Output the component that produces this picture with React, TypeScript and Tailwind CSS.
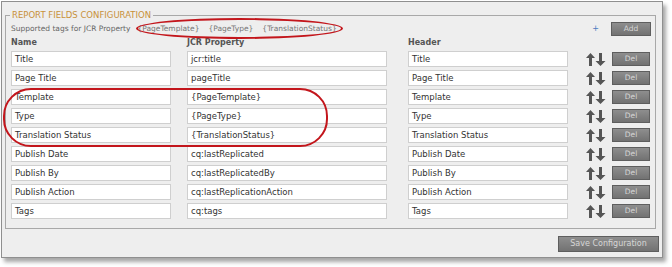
import React from 'react';

const rows = [
  ['Title', 'jcr:title', 'Title'],
  ['Page Title', 'pageTitle', 'Page Title'],
  ['Template', '{PageTemplate}', 'Template'],
  ['Type', '{PageType}', 'Type'],
  ['Translation Status', '{TranslationStatus}', 'Translation Status'],
  ['Publish Date', 'cq:lastReplicated', 'Publish Date'],
  ['Publish By', 'cq:lastReplicatedBy', 'Publish By'],
  ['Publish Action', 'cq:lastReplicationAction', 'Publish Action'],
  ['Tags', 'cq:tags', 'Tags'],
];

const font = { fontFamily: '"DejaVu Sans", Verdana, sans-serif' };

function Field({ value, className }: { value: string; className: string }) {
  return (
    <div
      className={`${className} flex h-[16px] shrink-0 items-center border border-[#cfcfcf] bg-white px-[3px] text-[8.5px] leading-none text-[#333]`}
    >
      {value}
    </div>
  );
}

function Arrows() {
  return (
    <svg width="20" height="13" viewBox="0 0 20 13" className="ml-[18px] shrink-0">
      <polygon points="4.5,0 9,5 6,5 6,13 3,13 3,5 0,5" fill="#555" />
      <polygon points="13,0 16,0 16,8 19.5,8 14.5,13 9.5,8 13,8" fill="#555" />
    </svg>
  );
}

function GrayButton({ label, className }: { label: string; className: string }) {
  return (
    <button
      className={`${className} flex shrink-0 items-center justify-center border border-[#5e5e5e] bg-gradient-to-b from-[#8e8e8e] to-[#727272] leading-none text-[#d6d6d6]`}
    >
      {label}
    </button>
  );
}

export default function App() {
  return (
    <div className="relative h-[267px] w-[672px] bg-white" style={font}>
      <div className="ml-[1px] mt-[1px] flex h-[257px] w-[662px] flex-col border border-[#8f8f8f] bg-[#eeeeee] px-[3px] pt-[7px] shadow-[3px_4px_4px_rgba(0,0,0,0.35)]">
        <fieldset className="w-[651px] border border-[#a8a8a8] pb-[9px] pl-[5px] pr-[4px]">
          <legend className="-ml-[1px] px-[2px] text-[8.5px] leading-[12px] text-[#c8913a]">
            REPORT FIELDS CONFIGURATION
          </legend>

          {/* supported tags + add */}
          <div className="mt-[1px] flex h-[14px] items-center">
            <span className="text-[7.5px] text-[#666]">Supported tags for JCR Property</span>
            <span className="ml-[7px] text-[7.5px] text-[#777]">{'{PageTemplate}'}</span>
            <span className="ml-[9px] text-[7.5px] text-[#777]">{'{PageType}'}</span>
            <span className="ml-[9px] text-[7.5px] text-[#777]">{'{TranslationStatus}'}</span>
            <span className="ml-auto mr-[12px] text-[8px] leading-none text-[#4a7bc0]">+</span>
            <GrayButton label="Add" className="h-[14px] w-[40px] text-[7.5px]" />
          </div>

          {/* column headers */}
          <div className="flex h-[14px] items-center text-[8px] font-bold text-[#555]">
            <span className="w-[176px]">Name</span>
            <span className="w-[221px]">JCR Property</span>
            <span>Header</span>
          </div>

          <div className="mt-[1px] flex flex-col gap-[3px]">
            {rows.map((r, i) => (
              <div key={i} className="flex h-[16px] items-center">
                <Field value={r[0]} className="w-[160px]" />
                <Field value={r[1]} className="ml-[16px] w-[200px]" />
                <Field value={r[2]} className="ml-[21px] w-[160px]" />
                <Arrows />
                <GrayButton label="Del" className="ml-[6px] h-[14px] w-[38px] text-[7.5px]" />
              </div>
            ))}
          </div>
        </fieldset>

        <div className="mt-[7px] flex justify-end">
          <GrayButton label="Save Configuration" className="h-[16px] w-[101px] text-[8px]" />
        </div>
      </div>

      {/* red annotation ovals */}
      <div className="pointer-events-none absolute left-[136px] top-[17px] h-[21px] w-[207px] rounded-[50%] border-2 border-[#c3161c]" />
      <div className="pointer-events-none absolute left-[3px] top-[87px] h-[59px] w-[325px] rounded-[28px] border-2 border-[#c3161c]" />
    </div>
  );
}
